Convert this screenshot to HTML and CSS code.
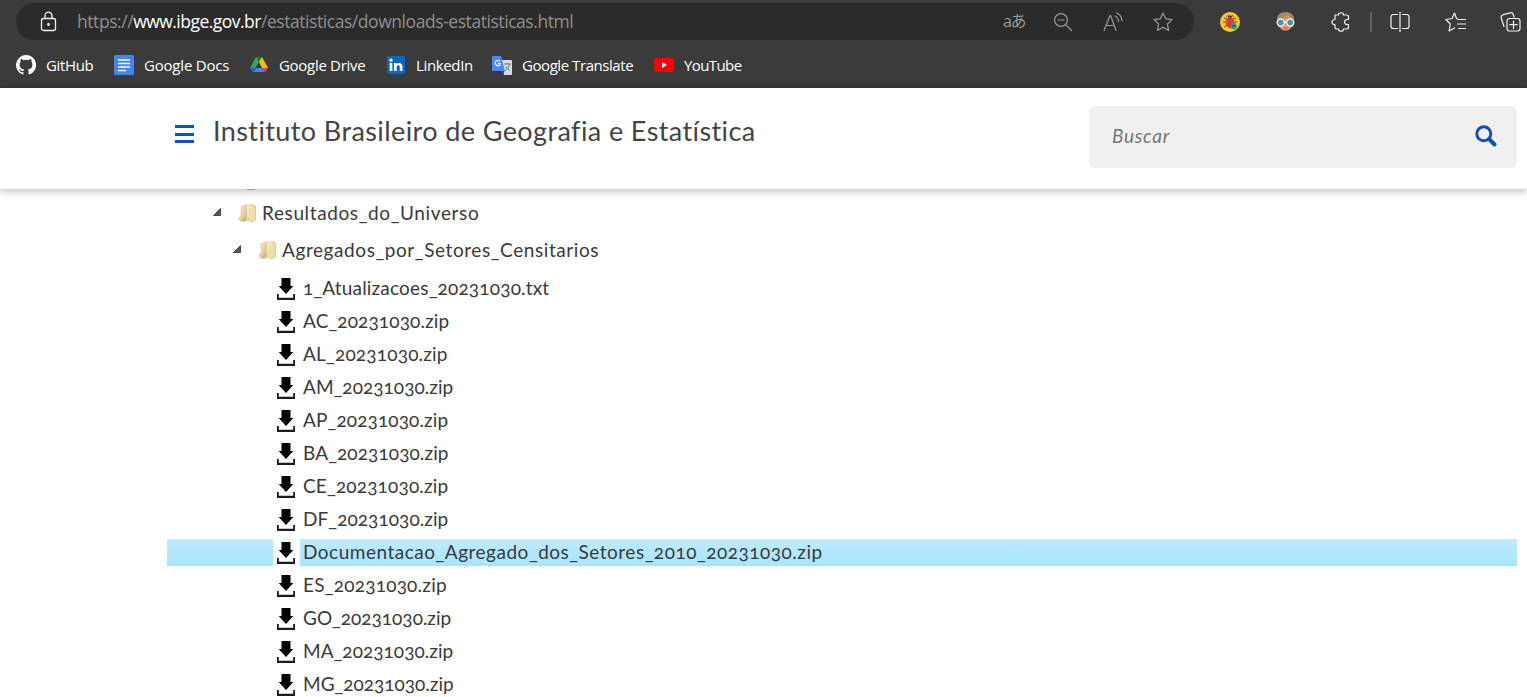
FILE: index.html
```html
<!DOCTYPE html>
<html lang="pt-BR">
<head>
<meta charset="utf-8">
<title>Instituto Brasileiro de Geografia e Estatística</title>
<link rel="stylesheet" href="styles.css">
</head>
<body>
<svg class="defs" width="0" height="0">
  <defs>
    <linearGradient id="gold" x1="0" y1="0" x2="1" y2="1"><stop offset="0" stop-color="#fff8dc"/><stop offset="1" stop-color="#d3b671"/></linearGradient>
    <symbol id="download" viewBox="0 0 20 22"><path d="M5.500 0h9v8h2.800L10 16 2.700 8h2.800z" fill="#000"/><path d="M1 16h1.800v3.700h14.400V16H19v6H1z" fill="#1c1c1c"/></symbol>
    <symbol id="folder" viewBox="0 0 19 19"><path d="M3 2.500 8 1v16l-6.500-.5L.8 14 3 12z" fill="url(#gold)" stroke="#d6c69a" stroke-width=".6"/><path d="m7.500 12-5 5.500H7l2-2z" fill="#cbb88c"/><path d="M8.500.8h7l2 1.200v14l-4.500 2.200-1.500-1.700H8.500z" fill="url(#gold)" stroke="#d2be88" stroke-width=".7"/><path d="M11 5 17 3v13l-4.500 2H11z" fill="#efdfaa"/></symbol>
    <symbol id="twisty" viewBox="0 0 8 8"><path d="M7.500.5v7H.5z" fill="#555" stroke="#333" stroke-width=".8"/></symbol>
  </defs>
</svg>
<div class="browser">
  <div class="toolbar">
    <div class="address">
      <svg class="lock" viewBox="0 0 18 22"><rect x="1.500" y="7.500" width="14" height="12" rx="2"/><path d="M5 7.500V4.700a3.500 3.500 0 0 1 7 0v2.800"/><circle cx="8.500" cy="13.500" r=".8"/></svg>
      <span class="url">https://<b>www.ibge.gov.br</b>/estatisticas/downloads-estatisticas.html</span>
      <span class="translate">aあ</span>
      <svg class="line-icon zoom" viewBox="0 0 20 20"><circle cx="8" cy="8" r="6.400"/><path d="m12.700 12.700 5.800 5.800M5 8h6"/></svg>
      <svg class="line-icon read" viewBox="0 0 20 20"><path d="m1 18.500 6-15h.6l5.500 15M3 13.500h8M12 4c2.300 1 3.300 3 3.500 5.500M13.500.8c3.300 1.400 5.200 4.200 5.500 8.200"/></svg>
      <svg class="line-icon star" viewBox="0 0 22 22"><path d="m11 2 2.700 5.800 6.400.8-4.700 4.400 1.200 6.400L11 16.300l-5.600 3.100 1.200-6.400-4.700-4.400 6.400-.8z"/></svg>
    </div>
    <svg class="bug" viewBox="0 0 20 20"><circle cx="10" cy="10" r="10" fill="#facb1f"/><path d="M8 3 6.500 5M12 3l1.500 2M7 7 4 6m3 4H3m4 3-3 2m9-8 3-1m-3 4h4m-4 3 3 2" stroke="#733d22"/><circle cx="10" cy="5.300" r="2" fill="#31343b"/><ellipse cx="10" cy="10.500" rx="4.300" ry="5.500" fill="#db4146"/><path d="M10 5v11" stroke="#aa2936" stroke-width=".7"/><circle cx="13.800" cy="14.200" r="3.100" fill="#12ad91"/><path d="m12.500 13 1.300 1.500 1.300-1.500m-1.300 1.500V16" stroke="#17483f"/></svg>
    <svg class="face" viewBox="0 0 20 20"><path d="M2 16 1 7Q2 0 10 0t9 7l-1 9z" fill="#a58a5d"/><path d="M3 7q8 0 10-4 1 4 4 4v5q-1 7.500-7 7.500T3 12z" fill="#f29267"/><path d="M2 8Q9 7 12 3l1 2-1 3z" fill="#c79660"/><circle cx="5" cy="11" r="3.700" fill="#4f91ac" stroke="#e3f3f5" stroke-width="1.500"/><circle cx="15" cy="11" r="3.700" fill="#4f91ac" stroke="#e3f3f5" stroke-width="1.500"/><path d="M8.500 10.500h3" stroke="#fff" stroke-width="1.300"/><path d="M7.500 16.500h5q-2 2-5 0" fill="#c7373f"/></svg>
    <svg class="line-icon light puzzle" viewBox="0 0 20 20"><path d="M4 3h3.500C7 0 13 0 12.500 3h3q2 0 2 2v2.500h-1c-4 0-4 5 0 5h1V15q0 2-2 2h-3c0 3-5 3-5 0H6q-2 0-2-2v-2.500c-4 .5-4-5 0-5V3z"/></svg>
    <span class="divider"></span>
    <svg class="line-icon light split" viewBox="0 0 20 20"><path d="M7.500 2.500h-4Q1 2.500 1 5v9q0 2.500 2.500 2.500h4M12.500 2.500h4Q19 2.500 19 5v9q0 2.500-2.500 2.500h-4M10 0v20"/></svg>
    <svg class="line-icon light favs" viewBox="0 0 21 20"><path d="M13.500 7.500 11.500 6.500 9.500 1 7 6.500 .8 7.500l4.500 4.500-1.200 7 5.500-3M13.500 7.500h7M12.500 12h8M13.500 16.500h7"/></svg>
    <svg class="line-icon light collections" viewBox="0 0 21 20"><rect x="7" y="6.500" width="13" height="12.500" rx="2.500"/><path d="M13.500 9v7.500M9.800 12.700h7.500M4 14.500 1.300 6.200Q.5 3.500 3 2.700L10.500.8q2-.5 2.700 1.700L14 5"/></svg>
  </div>
  <nav class="bookmarks">
    <a class="bm github"><svg viewBox="0 0 16 16"><path fill="#fff" d="M8 0a8 8 0 0 0-2.530 15.590c.4.070.55-.17.55-.38v-1.490c-2.010.37-2.530-.49-2.690-.94-.09-.23-.48-.94-.82-1.130-.28-.15-.68-.52-.01-.53.630-.01 1.080.58 1.230.82.720 1.210 1.870.87 2.330.66.070-.52.280-.87.510-1.070-1.780-.2-3.640-.89-3.640-3.950 0-.87.310-1.590.82-2.150-.08-.2-.36-1.020.08-2.120 0 0 .67-.21 2.200.82a7.600 7.600 0 0 1 4 0c1.530-1.040 2.200-.82 2.200-.82.440 1.100.16 1.920.08 2.120.51.560.82 1.270.82 2.150 0 3.070-1.870 3.750-3.650 3.950.29.250.54.730.54 1.480v2.200c0 .21.150.46.550.38A8 8 0 0 0 8 0z"/></svg><span>GitHub</span></a>
    <a class="bm docs"><svg viewBox="0 0 20 20"><rect width="20" height="20" rx="1.500" fill="#4285f4"/><path d="M4 5h12M4 8.500h12M4 12h12M4 15.500h8" stroke="#fff" stroke-width="1.700"/></svg><span>Google Docs</span></a>
    <a class="bm drive"><svg viewBox="0 0 20 20"><path d="M7 2h6l-3 5z" fill="#188038"/><path d="m7 2 3 5-6 10-3-4z" fill="#34a853"/><path d="m13 2 6 11h-6L10 7z" fill="#fbbc04"/><path d="M7 13h6l3 4H4z" fill="#4285f4"/><path d="m1 13 3 4 3-4z" fill="#1967d2"/><path d="M13 13h6l-3 4z" fill="#ea4335"/></svg><span>Google Drive</span></a>
    <a class="bm linkedin"><svg viewBox="0 0 18 18"><rect width="18" height="18" rx="1" fill="#0a66c2"/><circle cx="4" cy="4.200" r="1.600" fill="#fff"/><path d="M2.700 7h2.700v8H2.700zM7 7h2.600v1.200C11.300 6 15.500 6.500 15.500 10.500V15h-2.700v-4c0-2.500-3.100-2.500-3.100 0v4H7z" fill="#fff"/></svg><span>LinkedIn</span></a>
    <a class="bm gtranslate"><svg viewBox="0 0 20 20"><path d="M8 5h11q1 0 1 1v13q0 1-1 1h-7z" fill="#d9dce0"/><path d="M12 9h7m-3.500-1v1.500m2 0q-1 4-4 6m0-4q2 3 4.500 4" stroke="#607988" fill="none"/><path d="m9 15 4 0-2 5z" fill="#3949ab"/><path d="M1 1h8l4 15H1q-1 0-1-1V2q0-1 1-1z" fill="#4c8bf5"/><path d="M8 6.500a2.600 2.600 0 1 0 .5 2H6" stroke="#fff" stroke-width="1.200" fill="none"/></svg><span>Google Translate</span></a>
    <a class="bm youtube"><svg viewBox="0 0 20 20"><rect y="3" width="20" height="14" rx="3.500" fill="#f00"/><path d="m8 7 5 3-5 3z" fill="#fff"/></svg><span>YouTube</span></a>
  </nav>
</div>
<header class="site-header">
  <div class="menu"><i></i><i></i><i></i></div>
  <h1>Instituto Brasileiro de Geografia e Estatística</h1>
  <div class="search"><span>Buscar</span><svg viewBox="0 0 22 22"><circle cx="8.800" cy="8.800" r="7" stroke-width="3"/><path d="m14 14 5.500 5.500" stroke-width="4"/></svg></div>
</header>
<main class="tree">
  <div class="previous"></div>
  <div class="folder level1"><svg class="twisty"><use href="#twisty"/></svg><svg class="ficon"><use href="#folder"/></svg><span class="t1">Resultados_do_Universo</span></div>
  <div class="folder level2"><svg class="twisty"><use href="#twisty"/></svg><svg class="ficon"><use href="#folder"/></svg><span class="t2">Agregados_por_Setores_Censitarios</span></div>
  <div class="file"><svg><use href="#download"/></svg><span class="upd">1_Atualizacoes_20231030.txt</span></div>
  <div class="file"><svg><use href="#download"/></svg><span class="ac">AC_20231030.zip</span></div>
  <div class="file"><svg><use href="#download"/></svg><span class="al">AL_20231030.zip</span></div>
  <div class="file"><svg><use href="#download"/></svg><span class="am">AM_20231030.zip</span></div>
  <div class="file"><svg><use href="#download"/></svg><span class="ap">AP_20231030.zip</span></div>
  <div class="file"><svg><use href="#download"/></svg><span class="ba">BA_20231030.zip</span></div>
  <div class="file"><svg><use href="#download"/></svg><span class="ce">CE_20231030.zip</span></div>
  <div class="file"><svg><use href="#download"/></svg><span class="df">DF_20231030.zip</span></div>
  <div class="file selected"><div class="icon-cell"><svg><use href="#download"/></svg></div><span class="doc">Documentacao_Agregado_dos_Setores_2010_20231030.zip</span></div>
  <div class="file"><svg><use href="#download"/></svg><span class="es">ES_20231030.zip</span></div>
  <div class="file"><svg><use href="#download"/></svg><span class="go">GO_20231030.zip</span></div>
  <div class="file"><svg><use href="#download"/></svg><span class="ma">MA_20231030.zip</span></div>
  <div class="file"><svg><use href="#download"/></svg><span class="mg">MG_20231030.zip</span></div>
</main>
</body>
</html>
```
FILE: styles.css
```css
* { box-sizing: border-box; }
body { margin: 0; height: 697px; overflow: hidden; background: #fff; font-family: Lato, "Open Sans", sans-serif; color: #3a3a3a; display: flex; flex-direction: column; }
svg { display: block; flex: none; }
.defs { position: absolute; }
.browser { height: 88px; flex: none; background: #3b3b3b; border-bottom: 1px solid #353535; font-family: "Open Sans", "Noto Sans", sans-serif; }
.toolbar { height: 43px; display: flex; align-items: center; padding-left: 16px; }
.address { width: 1178px; height: 37px; border-radius: 19px; background: #2b2b2b; display: flex; align-items: center; flex: none; }
.lock { width: 18px; height: 22px; margin-left: 24px; fill: none; stroke: #f2f2f2; stroke-width: 1.3; }
.url { width: 926px; margin-left: 19px; padding-bottom: 1px; color: #8f8f8f; font: 17.5px/24px "Open Sans", sans-serif; letter-spacing: -.44px; white-space: nowrap; }
.url b { color: #fff; font-weight: 400; letter-spacing: -.52px; }
.translate { width: 22px; padding-bottom: 2px; color: #999; font: 16px/20px "Open Sans", "Noto Sans CJK JP", sans-serif; white-space: nowrap; letter-spacing: -1.5px; }
.line-icon { fill: none; stroke: #999; stroke-width: 1.2; stroke-linejoin: round; stroke-linecap: round; width: 20px; height: 20px; }
.light { stroke: #f0f0f0; }
.zoom { margin-left: 28px; }
.read { margin-left: 30px; }
.star { margin-left: 29px; width: 22px; height: 22px; }
.bug { width: 20px; height: 20px; margin-left: 26px; fill: none; }
.face { width: 19px; height: 19px; margin-left: 36px; }
.puzzle { margin-left: 36px; }
.divider { width: 2px; height: 20px; margin-left: 19px; background: #626262; }
.split { margin-left: 18px; }
.favs { width: 21px; margin-left: 35px; }
.collections { width: 21px; margin-left: 34px; }
.bookmarks { height: 44px; display: flex; align-items: center; padding-left: 16px; }
.bm { display: flex; align-items: center; gap: 10px; color: #fff; font: 15px/20px "Open Sans", sans-serif; white-space: nowrap; flex: none; letter-spacing: -.35px; }
.bm svg { width: 20px; height: 20px; }
.github { width: 98px; }
.docs { width: 135px; letter-spacing: -.2px; }
.drive { width: 138px; letter-spacing: -.3px; }
.linkedin { width: 105px; gap: 11px; }
.linkedin svg { width: 18px; height: 18px; }
.gtranslate { width: 162px; letter-spacing: -.44px; }
.youtube { letter-spacing: -.6px; }
.site-header { height: 101px; flex: none; background: #fff; padding: 18px 10px 21px 175px; display: flex; align-items: flex-start; box-shadow: 0 2px 8px #0004; position: relative; z-index: 1; }
.menu { display: flex; flex-direction: column; gap: 4.500px; padding: 19px 19px 0 0; width: 38px; }
.menu i { height: 3px; background: #1151b9; }
h1 { margin: 8px 0 0; font-size: 27px; line-height: 34px; font-weight: 400; color: #444; white-space: nowrap; letter-spacing: .4px; }
.search { height: 62px; width: 428px; margin-left: auto; border-radius: 6px; background: #f0f0f0; display: flex; align-items: center; justify-content: space-between; padding: 0 20px 2px 23px; font-size: 19px; font-style: italic; color: #757575; }
.search span { letter-spacing: .7px; padding-bottom: 1px; }
.search svg { width: 22px; height: 22px; fill: none; stroke: #1151b9; stroke-linecap: round; }
.tree { padding-left: 167px; padding-right: 10px; font-size: 19px; }
.previous { width: 8px; height: 1px; margin-left: 80px; background: #c9bb91; }
.folder { display: flex; align-items: center; height: 37px; white-space: nowrap; }
.level1 { margin-top: 5px; padding-left: 46px; }
.level2 { padding-left: 66px; height: 37px; }
.twisty { width: 8px; height: 8px; margin-bottom: 3px; }
.ficon { width: 19px; height: 19px; margin: 0 5px 0 17px; }
.file { height: 27px; margin-bottom: 6px; display: flex; align-items: center; padding-left: 109px; white-space: nowrap; line-height: 27px; }
.level2 + .file { margin-top: 6px; }
.file svg { width: 20px; height: 22px; margin-right: 7px; }
.selected { padding-left: 106px; background: linear-gradient(#beebff, #a8e4ff); }
.icon-cell { width: 27px; height: 27px; padding: 3px 0 0 3px; margin-right: 3px; background: #fff; }
.file span, .folder span { font-feature-settings: "onum"; padding-bottom: 2px; }
.t1 { letter-spacing: .62px; }
.t2 { letter-spacing: .58px; }
.upd { letter-spacing: .18px; }
.ac, .ap { letter-spacing: .13px; }
.al { letter-spacing: .2px; }
.am, .ma { letter-spacing: .04px; }
.ba { letter-spacing: .1px; }
.ce { letter-spacing: .17px; }
.df { letter-spacing: .07px; }
.doc { letter-spacing: .51px; }
.es { letter-spacing: .23px; }
```
